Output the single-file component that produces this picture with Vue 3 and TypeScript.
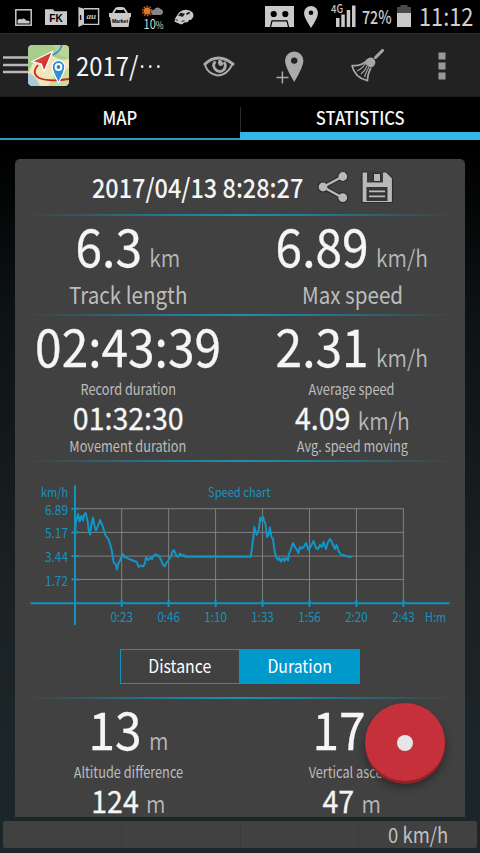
<template>
    <div class="screen">
        <header class="status">
            <div class="status-left">
                <svg class="icon-picture" width="17" height="17" viewBox="0 0 17 17">
                    <rect x="0.8" y="0.8" width="15.4" height="15.4" fill="none" stroke="#c9c9c9" stroke-width="1.5" />
                    <path d="M2.500 14.500V11.500Q4.500 8.500 6.500 10.500Q9 8 11 11.500L14.500 12v2.500z" fill="#c9c9c9" />
                </svg>
                <svg class="icon-folder" width="22" height="17" viewBox="0 0 22 17">
                    <path d="M0 1.2h8l1.5 2H22V17H0z" fill="#c9c9c9" />
                    <text x="11" y="13.6" class="glyph-fk">FK</text>
                </svg>
                <svg class="icon-au" width="22" height="20" viewBox="0 0 22 20">
                    <path d="M.4 0L6 1.8v15.6L.4 20z" fill="#c9c9c9" />
                    <path d="M2.6 8v5" stroke="#111" stroke-width="1.4" />
                    <path d="M6 1.8h14.6v15.6H6" fill="none" stroke="#c9c9c9" stroke-width="1.4" />
                    <text x="13.3" y="12" class="glyph-au">au</text>
                </svg>
                <svg class="icon-market" width="22" height="20" viewBox="0 0 22 20">
                    <path d="M3.5 7L7 1.5h8L18.5 7" fill="none" stroke="#c9c9c9" stroke-width="1.8" />
                    <path d="M8 0h6v3H8z" fill="#c9c9c9" />
                    <path d="M0 6h22v4h-1l-1.5 10h-17L1 10H0z" fill="#c9c9c9" />
                    <text x="11" y="15.6" class="glyph-market">Market</text>
                </svg>
                <div class="weather">
                    <svg width="21" height="12" viewBox="0 0 21 12">
                        <circle cx="5.2" cy="6" r="4.6" fill="none" stroke="#b9622b" stroke-width="1.5" stroke-dasharray="1.7 1.2" />
                        <circle cx="5.2" cy="6" r="3.5" fill="#e0762f" />
                        <path d="M12 10a2.6 2.6 0 0 1 0-5.2 4 4 0 0 1 7-.6 3 3 0 0 1-.5 5.8z" fill="#858585" />
                    </svg>
                    <span class="weather-text">10<small>%</small></span>
                </div>
                <svg class="icon-car" width="20" height="16" viewBox="0 0 20 16">
                    <path d="M1 9.5L5 3.5Q8 .6 12 .8q4 .1 6.5 2.5 1.3 2 .6 5l-2 2.5-2 .2-1.5 2.2-3.5.3-1.5 1.500q-2 .9-3.500-.6Q2 13.500.5 12.500z" fill="#c9c9c9" />
                    <path d="M4.500 6.500l2-2.500 4 .8-1.700 2.800z M12.500 4.300l3-1.300.5 1-3.200 1.800z" fill="#1a1a1a" stroke="#1a1a1a" stroke-width=".5" />
                    <path d="M1.500 10.500l2.500 1M7.500 12.500l3-1" stroke="#1a1a1a" stroke-width=".9" />
                </svg>
            </div>
            <div class="status-right">
                <svg width="29" height="21" viewBox="0 0 29 21">
                    <rect width="29" height="21" fill="#c9c9c9" />
                    <circle cx="8.7" cy="8" r="3.1" />
                    <circle cx="20.3" cy="8" r="3.1" />
                    <path d="M5.5 21l1.500-6.200h15l1.500 6.200" fill="none" stroke="#000" stroke-width="1.200" />
                </svg>
                <svg class="icon-pin" width="14" height="22" viewBox="0 0 14 22">
                    <path :d="pinSmall" fill="#c9c9c9" fill-rule="evenodd" />
                </svg>
                <svg class="icon-signal" width="25" height="25" viewBox="0 -2 25 25">
                    <path d="M5 14h3.500v9H5zM10.300 10.500h3.500V23h-3.500zM15.700 6h3.500v17h-3.500zM21 1.500h3.500V23H21z" fill="#c9c9c9" />
                    <text x="0" y="9" class="glyph-4g" textLength="12" lengthAdjust="spacingAndGlyphs">4G</text>
                </svg>
                <span class="percent">72%</span>
                <svg class="icon-battery" width="14" height="22" viewBox="0 0 14 22">
                    <path d="M3.500 0h7v2H14v20H0V2h3.500z" fill="#4a4a4a" />
                    <path d="M0 8h14v14H0z" fill="#c9c9c9" />
                </svg>
                <span class="clock">11:12</span>
            </div>
        </header>

        <nav class="actionbar">
            <svg class="menu" width="25" height="18" viewBox="0 0 25 18">
                <path d="M0 1.500h25M0 9h25M0 16h25" stroke="#b9b9b9" stroke-width="2.400" />
            </svg>
            <svg class="logo" width="41" height="41" viewBox="0 0 41 41">
                <defs>
                    <clipPath id="logo-clip"><rect width="41" height="41" rx="4.500" /></clipPath>
                    <linearGradient id="arrow-fill" x1="0" y1="0" x2="1" y2="1">
                        <stop offset="0" stop-color="#f0604c" />
                        <stop offset="1" stop-color="#b81d1d" />
                    </linearGradient>
                </defs>
                <g clip-path="url(#logo-clip)">
                    <rect width="41" height="41" fill="#f0e6ba" />
                    <path d="M0 0h41v14Q32 17 22 9L6 16 0 28z" fill="#a9cd8d" />
                    <path d="M24 0h17v12Q33 13 29 6z" fill="#b9d59a" />
                    <path d="M0 28q8 2 12 13H0z" fill="#a9c9dc" />
                    <path d="M26 30l15-7v18H20z" fill="#cbdca0" />
                    <path d="M34-1Q33 6 25 10" fill="none" stroke="#3d8fd8" stroke-width="1.700" />
                    <path d="M10 20Q3 28 11 33q10 4 30 1" fill="none" stroke="#c8281e" stroke-width="1.800" />
                    <path d="M4 16.500L24.500 6.500 16 26.500 13.300 19z" fill="url(#arrow-fill)" stroke="#fff" stroke-width="1.200" />
                    <path d="M30.500 15.500a6.400 6.400 0 0 1 6.400 6.400q0 4-6.400 15.800-6.400-11.800-6.400-15.800a6.400 6.400 0 0 1 6.400-6.400z" fill="#2e8ed6" stroke="#fff" stroke-width="1.200" />
                    <circle cx="30.500" cy="22" r="2.900" fill="#3583bb" stroke="#fff" stroke-width="2" />
                </g>
            </svg>
            <span class="title">2017/<i v-for="n in 3" :key="n" class="dot" /></span>
            <svg class="icon-eye" width="32" height="22" viewBox="0 0 32 22">
                <path d="M1 9Q15-5 31 9" fill="none" stroke="#aaa" stroke-width="3" />
                <path d="M2 9Q5 18 14.500 19.500 24 19 29 9" fill="none" stroke="#aaa" stroke-width="2" />
                <path d="M12.500 5.500Q9 9 12 13q4 4.500 8.500 1 3.500-4 .5-8" fill="none" stroke="#aaa" stroke-width="2.800" />
                <path d="M15.500 4q-1.500 4.500 1.500 6 3 0 3.500-2.500l-2.500-3.500z" fill="#aaa" />
            </svg>
            <svg class="icon-addpin" width="28" height="33" viewBox="0 0 28 33">
                <path d="M18.200.5a9.200 9.200 0 0 1 9.200 9.300q0 6-9.200 21.200Q9 15.800 9 9.800A9.200 9.200 0 0 1 18.200.5zm0 5.900a3.200 3.200 0 1 0 0 6.400 3.200 3.200 0 0 0 0-6.400z" fill="#aaa" fill-rule="evenodd" />
                <path d="M0 26.500h13M6.400 20v12.500" stroke="#222" stroke-width="4" />
                <path d="M.500 26.500h12M6.400 20.500v12" stroke="#aaa" stroke-width="1.500" />
            </svg>
            <svg class="icon-broom" width="33" height="33" viewBox="0 0 33 33">
                <path d="M24.500 8.500L31.500 1.500" stroke="#a5a5a5" stroke-width="3" stroke-linecap="round" />
                <path d="M15.500 10.500q4-3.500 7.500-.500 3 3.500-.500 7.500l-2.500 1q-5-1.500-6.500-5z" fill="#a5a5a5" />
                <path d="M15 12.500Q9 17.500 1 16.500q2.500 12 15.500 15.200 0-7 3.500-12.700" fill="none" stroke="#a5a5a5" stroke-width="1.700" stroke-linejoin="round" />
                <path d="M14 15q-3 5-8 7M16 17q-2 5-6 8M18 18q-3 5-4.500 10" fill="none" stroke="#a5a5a5" stroke-width="1.200" />
            </svg>
            <svg class="icon-more" width="8" height="28" viewBox="0 0 8 28">
                <path d="M.500.500h7v7h-7zM.500 10.500h7v7h-7zM.500 20.500h7v7h-7z" fill="#999" />
            </svg>
        </nav>

        <div class="tabs">
            <div v-for="tab in tabs" :key="tab" class="tab" :class="{ 'is-active': tab === activeTab }"
                @click="activeTab = tab">
                <span>{{ tab }}</span>
            </div>
        </div>

        <main class="content">
            <section class="card">
                <div class="card-header">
                    <h1 class="date"><span>2017/04/13 8:28:27</span></h1>
                    <svg class="icon-share" width="32" height="34" viewBox="0 0 32 34">
                        <g stroke="#2c2c2c">
                            <path d="M25.800 6.500L6 17l19.800 10.700" fill="none" stroke-width="4.500" />
                            <circle v-for="c in shareDots" :key="c.y" :cx="c.x" :cy="c.y" r="5" fill="#b9b9b9" stroke-width="1.200" />
                            <path d="M25.800 6.500L6 17l19.800 10.700" fill="none" stroke="#b9b9b9" stroke-width="2.300" />
                        </g>
                    </svg>
                    <svg class="icon-save" width="33" height="33" viewBox="0 0 33 33">
                        <path d="M1 1h24.500L31.500 7v24.500H1z" fill="#b9b9b9" stroke="#2c2c2c" stroke-width="1.200" />
                        <path d="M6 0h16v11.500H6z" fill="#3b3b3b" />
                        <path d="M12.500 2.500h7v8h-7z" fill="#b9b9b9" stroke="#2c2c2c" stroke-width="1" />
                        <path d="M5.500 16h21v14h-21z" fill="#353535" />
                        <path d="M8 20.300h16M8 25.300h16" stroke="#b9b9b9" stroke-width="1.700" />
                    </svg>
                </div>
                <div class="divider" />

                <div class="stats stats--short">
                    <div v-for="stat in summary" :key="stat.label" class="stat">
                        <p class="value"><span>{{ stat.value }}</span><small>{{ stat.unit }}</small></p>
                        <p class="label label--large"><span>{{ stat.label }}</span></p>
                    </div>
                </div>
                <div class="divider" />

                <div class="stats">
                    <div v-for="stat in speeds" :key="stat.label" class="stat">
                        <p class="value"><span>{{ stat.value }}</span><small v-if="stat.unit">{{ stat.unit }}</small></p>
                        <p class="label"><span>{{ stat.label }}</span></p>
                        <p class="value value--small"><span>{{ stat.subValue }}</span><small v-if="stat.unit">{{ stat.unit }}</small></p>
                        <p class="label label--sub"><span>{{ stat.subLabel }}</span></p>
                    </div>
                </div>
                <div class="divider" />

                <div class="chart-section">
                    <svg class="chart" width="450" height="170" viewBox="15 470 450 170">
                        <g stroke="#808080" stroke-width="1">
                            <path v-for="t in yTicks" :key="t.label" :d="`M75 ${t.y}H403.5`" />
                            <path v-for="t in xTicks" :key="t.label" :d="`M${t.x} 508.5V603`" />
                        </g>
                        <g stroke="#1593bf" stroke-width="2">
                            <path d="M75 485.500V625M30.500 603.200H449.500" />
                            <path v-for="t in yTicks" :key="t.label" :d="`M71.5 ${t.y}h7`" />
                            <path v-for="t in xTicks" :key="t.label" :d="`M${t.x} 600v7`" />
                        </g>
                        <polyline :points="speedLine" fill="none" stroke="#1096c8" stroke-width="2" stroke-linejoin="round" />
                        <g class="chart-text">
                            <text x="68" y="497" text-anchor="end" textLength="27" lengthAdjust="spacingAndGlyphs">km/h</text>
                            <text x="208" y="497" textLength="62.5" lengthAdjust="spacingAndGlyphs">Speed chart</text>
                            <text v-for="t in yTicks" :key="t.label" x="68" :y="t.y + 6" text-anchor="end"
                                textLength="23" lengthAdjust="spacingAndGlyphs">{{ t.label }}</text>
                            <text v-for="t in xTicks" :key="t.label" :x="t.x" y="622" text-anchor="middle"
                                textLength="22.5" lengthAdjust="spacingAndGlyphs">{{ t.label }}</text>
                            <text x="425" y="622" textLength="21" lengthAdjust="spacingAndGlyphs">H:m</text>
                        </g>
                    </svg>
                    <div class="toggle">
                        <button v-for="mode in modes" :key="mode" :class="{ 'is-selected': mode === activeMode }"
                            @click="activeMode = mode"><span>{{ mode }}</span></button>
                    </div>
                </div>
                <div class="divider" />

                <div class="stats">
                    <div v-for="stat in altitudes" :key="stat.label" class="stat">
                        <p class="value"><span>{{ stat.value }}</span><small>{{ stat.unit }}</small></p>
                        <p class="label"><span>{{ stat.label }}</span></p>
                        <p class="value value--small"><span>{{ stat.subValue }}</span><small>{{ stat.unit }}</small></p>
                    </div>
                </div>
            </section>
        </main>

        <footer class="bottom">
            <div class="cell" />
            <div class="cell" />
            <div class="cell" />
            <div class="cell"><span>0 km/h</span></div>
        </footer>

        <button class="record" aria-label="Record"><i /></button>
    </div>
</template>

<script lang="ts" setup>
import { ref } from 'vue'

interface Stat {
    value: string
    unit?: string
    label: string
    subValue?: string
    subLabel?: string
}

const tabs = ['MAP', 'STATISTICS']
const activeTab = ref('STATISTICS')

const modes = ['Distance', 'Duration']
const activeMode = ref('Duration')

const summary: Stat[] = [
    { value: '6.3', unit: 'km', label: 'Track length' },
    { value: '6.89', unit: 'km/h', label: 'Max speed' }
]

const speeds: Stat[] = [
    { value: '02:43:39', label: 'Record duration', subValue: '01:32:30', subLabel: 'Movement duration' },
    { value: '2.31', unit: 'km/h', label: 'Average speed', subValue: '4.09', subLabel: 'Avg. speed moving' }
]

const altitudes: Stat[] = [
    { value: '13', unit: 'm', label: 'Altitude difference', subValue: '124' },
    { value: '17', unit: 'm', label: 'Vertical ascent', subValue: '47' }
]

const yTicks = [
    { label: '6.89', y: 508.7 },
    { label: '5.17', y: 532.4 },
    { label: '3.44', y: 556.1 },
    { label: '1.72', y: 579.5 }
]

const xTicks = ['0:23', '0:46', '1:10', '1:33', '1:56', '2:20', '2:43'].map((label, i) => ({
    label,
    x: 121.7 + i * 46.95
}))

const shareDots = [{ x: 25.8, y: 6.5 }, { x: 6, y: 17 }, { x: 25.8, y: 27.7 }]

const pinSmall = 'M7 0a7 7 0 0 1 7 7q0 4.5-7 15Q0 11.5 0 7a7 7 0 0 1 7-7zm0 4.5a2.3 2.3 0 1 0 0 4.6 2.3 2.3 0 0 0 0-4.6z'

const speedLine = [
    '75.3,531 76,521.5 78,514 79.7,521.5 81.3,516 83,520.5 84,515 85.7,513 87.7,521.5 88.6,530 90,534.5 91.3,525 93,517.5',
    '94.3,525 96,530.5 98,526 100,520 102.3,525 103.5,529 105.3,535 108.3,539 109.7,543 111.7,550 113.7,562.5',
    '115.5,564 117,569.5 118.5,563 120,560.5 122.7,554 124,557 126,557.3 129,559 131.7,560 134,561 136.7,562 138.7,567',
    '141,565.5 143.3,566.5 145,563 146,557.5 148.3,560 150.7,557.5 152,559 153.3,556 156,554 157.5,556 158.7,555.5',
    '161.3,560.5 163,565 164.7,566.5 166,563.5 168,561 171,556 172.5,551.5 174,550 176,555 178,557 180,553.5 182,556 183.5,555',
    '185,556.7 250.7,556.7 252,548 252.7,541.5 253.5,536 254.3,527 256.7,535 258.7,530 260.3,517.5 261.5,520 263,517 264.3,521',
    '265.5,524 267,537 268.5,535 270,527.5 271.5,537 273,539 274.3,549 276,557 278,560 279.5,558 281,561.5',
    '283,558 284.5,561 286,558 288,560.5 289,554 291,549 293,543 295,547 297,550 298.5,553 300,547 302,548.5',
    '304,546.5 306,543 308.5,550 311,546 313.5,541 316,548 318,549 320,545 322,547 323.5,542 326,549 328,542',
    '330,539 332,542.5 335,549 336.5,545 339,552 341,554.5 346,556 351.5,557.3'
].join(' ')
</script>

<style>
body {
    background: #000;
}
</style>

<style scoped>
.screen {
    position: relative;
    display: flex;
    flex-direction: column;
    width: 480px;
    height: 853px;
    overflow: hidden;
    color: #f5f5f5;
    font-family: "Noto Sans CJK JP", "Noto Sans", sans-serif;
    background: linear-gradient(#000 0, #000 150px, #0e1415 330px, #1a2224 600px, #1d2729 100%);
}

p,
h1 {
    margin: 0;
    font-weight: 400;
}

svg {
    display: block;
    flex: none;
}

.status {
    display: flex;
    justify-content: space-between;
    height: 33px;
    flex: none;
    background: #000;
}

.status-left {
    display: flex;
    align-items: flex-start;
    padding-left: 15px;
}

.icon-picture {
    margin-top: 9px;
}

.icon-folder {
    margin: 8px 0 0 13px;
}

.icon-au {
    margin: 7px 0 0 11px;
}

.icon-market {
    margin: 7px 0 0 9px;
}

.glyph-fk {
    font: 700 10px "Liberation Sans", sans-serif;
    text-anchor: middle;
    fill: #000;
}

.glyph-au {
    font: italic 700 9px "Liberation Serif", serif;
    text-anchor: middle;
    fill: #c9c9c9;
}

.glyph-market {
    font: 700 5px "Liberation Sans", sans-serif;
    text-anchor: middle;
    fill: #000;
}

.glyph-4g {
    font-size: 11px;
    font-weight: 500;
    fill: #c9c9c9;
}

.weather {
    width: 21px;
    margin: 5px 0 0 11px;
}

.weather-text {
    display: block;
    width: 21px;
    font-size: 13px;
    line-height: 13px;
    text-align: center;
    white-space: nowrap;
    color: #d5d5d5;
    transform: scaleX(0.85);
}

.weather-text small {
    font-size: 10px;
}

.icon-car {
    margin: 9px 0 0 11px;
}

.status-right {
    display: flex;
    align-items: flex-start;
    padding-top: 6px;
    color: #cfcfcf;
}

.icon-pin {
    margin-left: 10px;
}

.icon-signal {
    margin: -4px 0 0 13px;
}

.percent {
    width: 31px;
    margin: -1px 0 0 6px;
    font-size: 18px;
    font-weight: 500;
    line-height: 22px;
    white-space: nowrap;
    transform: scaleX(0.79);
    transform-origin: 0 0;
}

.icon-battery {
    margin: -1px 0 0 4px;
}

.clock {
    width: 61px;
    margin: -2px 0 0 8px;
    font-size: 25px;
    line-height: 23px;
    white-space: nowrap;
    transform: scaleX(0.87);
    transform-origin: 0 0;
}

.actionbar {
    display: flex;
    align-items: center;
    height: 62px;
    flex: none;
    padding-left: 3px;
    background: #222;
    border-top: 1px solid #2e2e2e;
    border-bottom: 1px solid #1a1a1a;
}

.logo {
    margin: 1px 0 0;
}

.title {
    width: 127px;
    margin: -1px 0 0 7px;
    font-size: 26.5px;
    line-height: 40px;
    white-space: nowrap;
    transform: scaleX(0.9);
    transform-origin: 0 50%;
}

.dot {
    display: inline-block;
    width: 3px;
    height: 3px;
    margin: 0 3px 8px;
    border-radius: 50%;
    background: #f0f0f0;
}

.icon-eye {
    margin-top: 4px;
}

.icon-addpin {
    margin-left: 41px;
    margin-top: 4px;
}

.icon-broom {
    margin-left: 47px;
}

.icon-more {
    margin: 2px 0 0 54px;
}

.tabs {
    display: flex;
    height: 43px;
    flex: none;
    background: #000;
}

.tab {
    box-sizing: border-box;
    flex: 1;
    border-bottom: 2px solid #2f9dbd;
    height: 42.5px;
    font-size: 18px;
    font-weight: 500;
    line-height: 41px;
    text-align: center;
}

.tab span {
    display: inline-block;
    transform: scaleX(0.92);
}

.tab.is-active {
    border-bottom: 8px solid #33b5e5;
    background: linear-gradient(#2c2c2c, #2c2c2c) 0 10px / 1px 25px no-repeat;
}

.content {
    flex: none;
    height: 658px;
    padding: 19px 15px 0;
    box-sizing: content-box;
    overflow: hidden;
}

.card {
    height: 700px;
    border-radius: 5px;
    background: #414141;
}

.card-header {
    display: flex;
    align-items: center;
    height: 55px;
    padding-left: 77px;
}

.date {
    width: 211px;
    font-size: 26.5px;
    font-weight: 500;
    line-height: 40px;
    white-space: nowrap;
}

.date span {
    display: inline-block;
    transform: scaleX(0.885);
    transform-origin: 0 50%;
}

.icon-share {
    margin: 1px 0 0 14px;
}

.icon-save {
    margin: 2px 0 0 12px;
}

.divider {
    height: 2px;
    margin: 0 10px;
    background: linear-gradient(90deg, rgba(30, 145, 178, 0), #1f7f98 35%, #218fac 50%, #1f7f98 65%, rgba(30, 145, 178, 0));
}

.stats {
    display: grid;
    grid-template-columns: 224px 224px;
    justify-content: center;
    height: 144px;
    text-align: center;
}

.stats--short {
    height: 98px;
}

.stat {
    display: flex;
    flex-direction: column;
    align-items: center;
    padding-top: 3px;
}

.value {
    height: 52px;
    font-size: 52px;
    line-height: 52px;
    white-space: nowrap;
    transform: scaleX(0.92);
    -webkit-text-stroke: 0.3px currentColor;
}

.value small {
    margin-left: 8px;
    font-size: 23px;
    font-weight: 350;
    line-height: 0;
    color: #b8b8b8;
    -webkit-text-stroke: 0;
}

.value--small {
    height: 31px;
    margin-top: 2px;
    font-size: 31px;
    line-height: 31px;
}

.label {
    margin-top: 8px;
    font-size: 15px;
    line-height: 20px;
    white-space: nowrap;
    color: #bdbdbd;
    transform: scaleX(0.85);
}

.label--sub {
    margin-top: 4px;
}

.label--large {
    margin-top: 7px;
    font-size: 23px;
    line-height: 32px;
    transform: scaleX(0.895);
}

.chart-section {
    display: flex;
    flex-direction: column;
    align-items: center;
    height: 234.5px;
    padding-top: 8px;
    box-sizing: border-box;
}

.chart-text {
    font-size: 13px;
    fill: #1593bf;
}

.toggle {
    display: flex;
    margin-top: 9px;
}

.toggle button {
    box-sizing: border-box;
    width: 120px;
    height: 35px;
    padding: 0 0 3px;
    border: 1px solid #1593bf;
    background: transparent;
    color: #fff;
    font-family: inherit;
    font-size: 18px;
    line-height: 30px;
}

.toggle button span {
    display: inline-block;
    transform: scaleX(0.88);
}

.toggle button.is-selected {
    background: #0099cc;
    border-color: #0099cc;
}

.bottom {
    display: flex;
    flex: none;
    height: 27px;
    margin: 4px 3px 0;
    border-radius: 2px;
    background: #414141;
}

.cell {
    flex: 1;
    height: 27px;
    box-sizing: border-box;
    border-left: 1px solid #3b3b3b;
    font-size: 21px;
    line-height: 26px;
    text-align: center;
    color: #c0c0c0;
}

.cell:first-child {
    border-left: 0;
}

.cell span {
    display: inline-block;
    transform: scaleX(0.88);
}

.record {
    position: absolute;
    left: 365px;
    top: 703px;
    display: flex;
    align-items: center;
    justify-content: center;
    width: 80px;
    height: 78px;
    padding: 2px 0 0;
    border: 0;
    border-radius: 50%;
    background: #c5303b;
    box-shadow: 0 3px 0 #92222a, 0 6px 8px rgba(0, 0, 0, 0.4);
}

.record i {
    width: 16px;
    height: 16px;
    border-radius: 50%;
    background: #e6e6e6;
}
</style>
